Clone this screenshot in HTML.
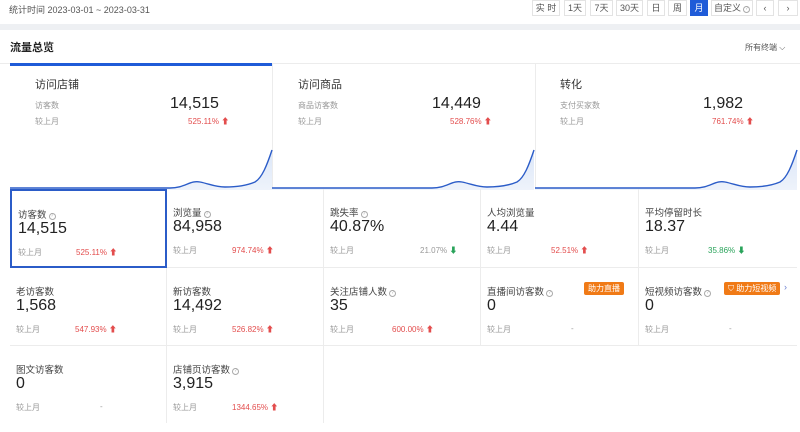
<!DOCTYPE html><html><head><meta charset="utf-8"><style>
*{box-sizing:border-box;margin:0;padding:0}
body{width:800px;height:432px;overflow:hidden;background:#fff;font-family:"Liberation Sans","Noto Sans CJK SC",sans-serif;color:#333;position:relative}
.a{position:absolute;white-space:nowrap}
.btn{position:absolute;top:0;height:16px;border:1px solid #e3e3e3;font-size:9px;color:#555;text-align:center;line-height:14px;background:#fff}
.s{font-size:8px;color:#999}
.r{font-size:8px;color:#e34d4d}
.g{font-size:8px;color:#29a35a}
.cell{position:absolute;border-right:1px solid #ececec;border-bottom:1px solid #ececec}
.cell .t{position:absolute;left:6px;top:16px;font-size:9.5px;color:#444}
.cell .v{position:absolute;left:6px;top:29px;font-size:16px;color:#222}
.cell .c{position:absolute;left:6px;top:56px;font-size:8px;color:#999}
.cell .p{position:absolute;top:56px;font-size:8px}
.q{display:inline-block;width:7px;height:7px;border:1px solid #aaa;border-radius:50%;font-size:5px;line-height:5px;text-align:center;color:#aaa;vertical-align:1px;margin-left:2px}
.tag{position:absolute;top:14px;background:#f07a16;color:#fff;font-size:8px;padding:1px 4px;border-radius:2px}
</style></head><body>
<div class="a" style="left:9px;top:3px;font-size:9px;color:#555">统计时间 2023-03-01 ~ 2023-03-31</div>
<div class="btn" style="left:532px;width:28px">实 时</div>
<div class="btn" style="left:564px;width:22px">1天</div>
<div class="btn" style="left:590px;width:23px">7天</div>
<div class="btn" style="left:616px;width:27px">30天</div>
<div class="btn" style="left:647px;width:18px">日</div>
<div class="btn" style="left:668px;width:19px">周</div>
<div class="btn" style="left:690px;width:18px;background:#1f5bd8;color:#fff;border-color:#1f5bd8">月</div>
<div class="btn" style="left:711px;width:42px">自定义<span class="q">?</span></div>
<div class="btn" style="left:756px;width:18px">‹</div>
<div class="btn" style="left:778px;width:20px">›</div>
<div class="a" style="left:0;top:24px;width:800px;height:6px;background:#eef0f3"></div>
<div class="a" style="left:10px;top:39px;font-size:11px;font-weight:bold;color:#222">流量总览</div>
<div class="a" style="left:745px;top:42px;font-size:8px;color:#555">所有终端 ⌵</div>
<div class="a" style="left:0;top:63px;width:800px;height:1px;background:#ececec"></div>
<div class="a" style="left:10px;top:63px;width:262px;height:3px;background:#1f5bd8"></div>
<div class="a" style="left:272px;top:64px;width:1px;height:125px;background:#ececec"></div>
<div class="a" style="left:535px;top:64px;width:1px;height:125px;background:#ececec"></div>
<svg class="a" style="left:0;top:140px" width="800" height="50">
<defs><linearGradient id="f" x1="0" y1="0" x2="0" y2="1"><stop offset="0" stop-color="#dbe6f8"/><stop offset="1" stop-color="#eef3fb"/></linearGradient></defs>
<g id="sp"><path d="M10 48 L170 48 C185 48 190 40 200 42 C210 44 215 47 225 47 C240 47 248 45 255 42 C262 38 267 25 272 10 L272 50 L10 50Z" fill="url(#f)"/>
<path d="M10 48 L170 48 C185 48 190 40 200 42 C210 44 215 47 225 47 C240 47 248 45 255 42 C262 38 267 25 272 10" fill="none" stroke="#2b5cc8" stroke-width="1.4"/></g>
<use href="#sp" x="262"/><use href="#sp" x="525"/>
</svg>
<div class="a" style="left:35px;top:76px;font-size:11px;color:#333">访问店铺</div>
<div class="a s" style="left:35px;top:100px">访客数</div><div class="a s" style="left:35px;top:116px">较上月</div>
<div class="a" style="left:170px;top:95px;font-size:16px;color:#222">14,515</div>
<div class="a r" style="left:188px;top:116px">525.11% <b>⬆</b></div>
<div class="a" style="left:298px;top:76px;font-size:11px">访问商品</div>
<div class="a s" style="left:298px;top:100px">商品访客数</div><div class="a s" style="left:298px;top:116px">较上月</div>
<div class="a" style="left:432px;top:95px;font-size:16px;color:#222">14,449</div>
<div class="a r" style="left:450px;top:116px">528.76% <b>⬆</b></div>
<div class="a" style="left:560px;top:76px;font-size:11px">转化</div>
<div class="a s" style="left:560px;top:100px">支付买家数</div><div class="a s" style="left:560px;top:116px">较上月</div>
<div class="a" style="left:703px;top:95px;font-size:16px;color:#222">1,982</div>
<div class="a r" style="left:712px;top:116px">761.74% <b>⬆</b></div>

<div class="cell" style="left:10px;top:189px;width:157px;height:79px;border:2px solid #2b5cc8"><div class="t">访客数<span class="q">?</span></div><div class="v">14,515</div><div class="c">较上月</div><div class="p r" style="left:64px">525.11% <b>⬆</b></div></div>
<div class="cell" style="left:167px;top:189px;width:157px;height:79px"><div class="t">浏览量<span class="q">?</span></div><div class="v">84,958</div><div class="c">较上月</div><div class="p r" style="left:65px">974.74% <b>⬆</b></div></div>
<div class="cell" style="left:324px;top:189px;width:157px;height:79px"><div class="t">跳失率<span class="q">?</span></div><div class="v">40.87%</div><div class="c">较上月</div><div class="p s" style="left:96px">21.07% <b class="g">⬇</b></div></div>
<div class="cell" style="left:481px;top:189px;width:158px;height:79px"><div class="t">人均浏览量</div><div class="v">4.44</div><div class="c">较上月</div><div class="p r" style="left:70px">52.51% <b>⬆</b></div></div>
<div class="cell" style="left:639px;top:189px;width:158px;height:79px;border-right:0"><div class="t">平均停留时长</div><div class="v">18.37</div><div class="c">较上月</div><div class="p g" style="left:69px">35.86% <b>⬇</b></div></div>

<div class="cell" style="left:10px;top:268px;width:157px;height:78px"><div class="t">老访客数</div><div class="v">1,568</div><div class="c">较上月</div><div class="p r" style="left:65px">547.93% <b>⬆</b></div></div>
<div class="cell" style="left:167px;top:268px;width:157px;height:78px"><div class="t">新访客数</div><div class="v">14,492</div><div class="c">较上月</div><div class="p r" style="left:65px">526.82% <b>⬆</b></div></div>
<div class="cell" style="left:324px;top:268px;width:157px;height:78px"><div class="t">关注店铺人数<span class="q">?</span></div><div class="v">35</div><div class="c">较上月</div><div class="p r" style="left:68px">600.00% <b>⬆</b></div></div>
<div class="cell" style="left:481px;top:268px;width:158px;height:78px"><div class="t">直播间访客数<span class="q">?</span></div><div class="tag" style="left:103px">助力直播</div><div class="v">0</div><div class="c">较上月</div><div class="p s" style="left:90px">-</div></div>
<div class="cell" style="left:639px;top:268px;width:158px;height:78px;border-right:0"><div class="t">短视频访客数<span class="q">?</span></div><div class="tag" style="left:85px">⛉ 助力短视频</div><div class="a" style="left:145px;top:14px;font-size:9px;color:#6a7fd0">›</div><div class="v">0</div><div class="c">较上月</div><div class="p s" style="left:90px">-</div></div>

<div class="cell" style="left:10px;top:346px;width:157px;height:77px;border-bottom:0"><div class="t">图文访客数</div><div class="v">0</div><div class="c">较上月</div><div class="p s" style="left:90px">-</div></div>
<div class="cell" style="left:167px;top:346px;width:157px;height:77px;border-bottom:0"><div class="t">店铺页访客数<span class="q">?</span></div><div class="v">3,915</div><div class="c">较上月</div><div class="p r" style="left:65px">1344.65% <b>⬆</b></div></div>
</body></html>
